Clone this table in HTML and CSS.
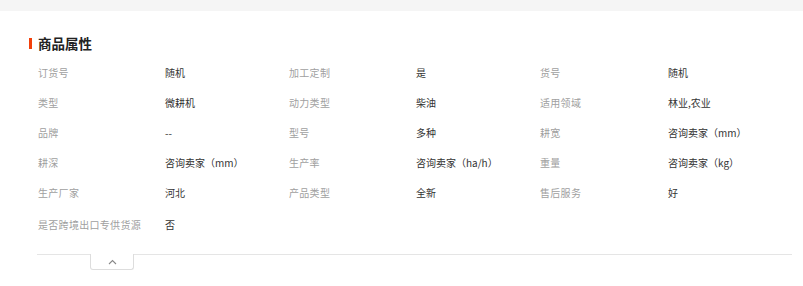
FILE: index.html
```html
<!DOCTYPE html>
<html lang="zh">
<head>
<meta charset="utf-8">
<link rel="stylesheet" href="styles.css">
</head>
<body>
<div class="topband"></div>
<section class="attrs">
  <h2 class="title"><span class="bar"></span>商品属性</h2>
  <div class="grid">
    <div class="k">订货号</div><div class="v">随机</div>
    <div class="k">加工定制</div><div class="v">是</div>
    <div class="k">货号</div><div class="v">随机</div>

    <div class="k">类型</div><div class="v">微耕机</div>
    <div class="k">动力类型</div><div class="v">柴油</div>
    <div class="k">适用领域</div><div class="v">林业,农业</div>

    <div class="k">品牌</div><div class="v">--</div>
    <div class="k">型号</div><div class="v">多种</div>
    <div class="k">耕宽</div><div class="v">咨询卖家（mm）</div>

    <div class="k">耕深</div><div class="v">咨询卖家（mm）</div>
    <div class="k">生产率</div><div class="v">咨询卖家（ha/h）</div>
    <div class="k">重量</div><div class="v">咨询卖家（kg）</div>

    <div class="k">生产厂家</div><div class="v">河北</div>
    <div class="k">产品类型</div><div class="v">全新</div>
    <div class="k">售后服务</div><div class="v">好</div>

    <div class="k last">是否跨境出口专供货源</div><div class="v last">否</div>
  </div>
  <div class="foot">
    <button class="toggle" type="button"><svg width="9" height="6" viewBox="0 0 9 6"><path d="M1 5 L4.5 1.5 L8 5" fill="none" stroke="#888" stroke-width="1.1"/></svg></button>
  </div>
</section>
</body>
</html>
```

FILE: styles.css
```css
html, body {
  margin: 0;
  padding: 0;
  background: #fff;
  font-family: "Noto Sans CJK SC", "Microsoft YaHei", sans-serif;
}
.topband {
  height: 11px;
  background: #f5f5f5;
}
.attrs {
  padding: 25px 11px 0 29px;
}
.title {
  display: flex;
  align-items: center;
  margin: 0;
  height: 14px;
  font-size: 13.5px;
  font-weight: 700;
  color: #222;
  line-height: 14px;
}
.bar {
  width: 3px;
  height: 11px;
  background: #f2400b;
  margin-right: 6px;
}
.grid {
  display: grid;
  grid-template-columns: 127px 124px 127px 124px 128px 1fr;
  grid-auto-rows: 30px;
  margin: 7px 0 0 9px;
  font-size: 10px;
  align-items: center;
}
.k {
  color: #a0a0a0;
  letter-spacing: 0.3px;
}
.v {
  color: #333;
}
.last {
  padding-top: 4px;
}
.foot {
  margin: 17px 0 0 8px;
  border-top: 1px solid #e5e5e5;
  height: 20px;
}
.toggle {
  display: flex;
  align-items: center;
  justify-content: center;
  margin: -1px 0 0 53px;
  width: 44px;
  height: 16px;
  padding: 0;
  border: 1px solid #ddd;
  border-top: none;
  border-radius: 0 0 3px 3px;
  background: #fff;
}
```
